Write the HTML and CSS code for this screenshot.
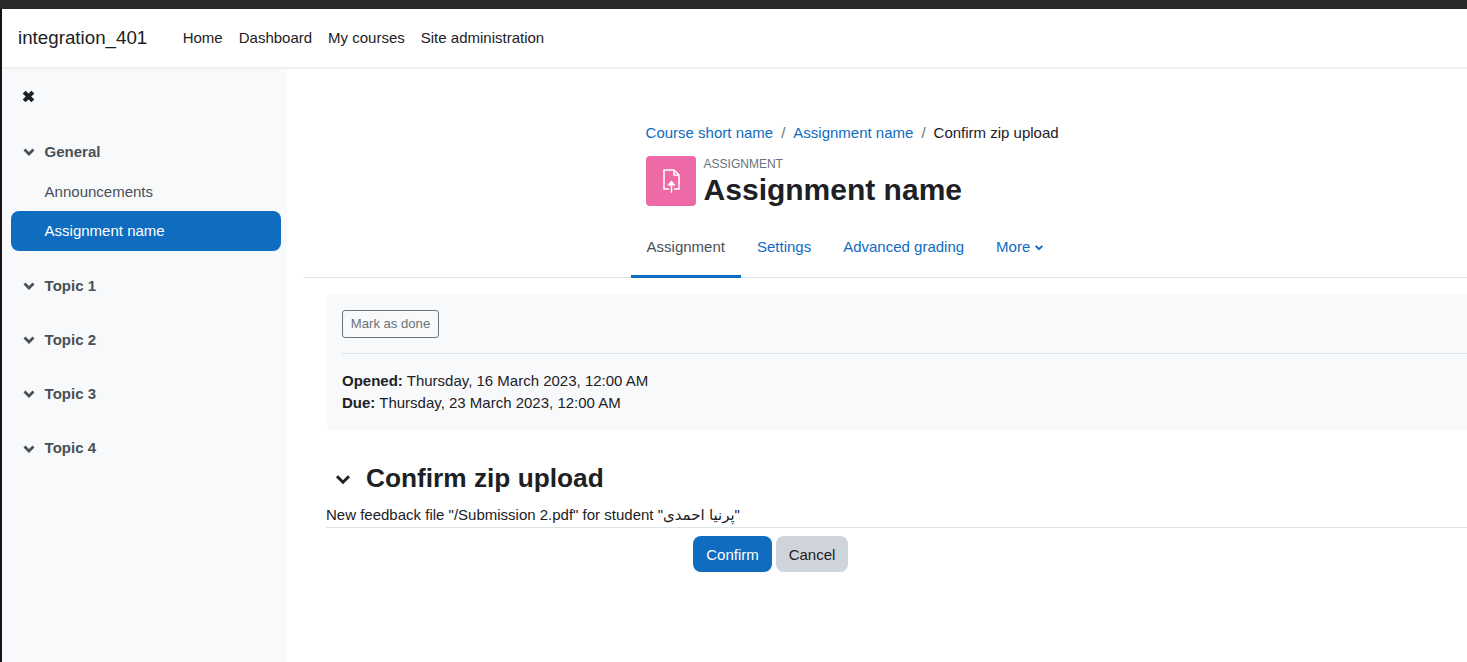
FILE: index.html
```html
<!DOCTYPE html>
<html lang="en">
<head>
<meta charset="utf-8">
<title>Confirm zip upload</title>
<link rel="stylesheet" href="styles.css">
</head>
<body>
<div class="titlebar"></div>
<div class="window">
  <header class="navbar">
    <a class="brand">integration_401</a>
    <nav class="primary">
      <a>Home</a><a>Dashboard</a><a>My courses</a><a>Site administration</a>
    </nav>
  </header>
  <div class="body">
    <aside class="drawer">
      <svg class="close" viewBox="0 0 12 12"><path d="M2 2 L10 10 M10 2 L2 10" /></svg>
      <section class="sec sec-first">
        <div class="sec-title"><svg class="chev" viewBox="0 0 12 8"><path d="M1.5 1.5 L6 6 L10.5 1.5"/></svg>General</div>
        <a class="item">Announcements</a>
        <a class="item active">Assignment name</a>
      </section>
      <section class="sec"><div class="sec-title"><svg class="chev" viewBox="0 0 12 8"><path d="M1.5 1.5 L6 6 L10.5 1.5"/></svg>Topic 1</div></section>
      <section class="sec"><div class="sec-title"><svg class="chev" viewBox="0 0 12 8"><path d="M1.5 1.5 L6 6 L10.5 1.5"/></svg>Topic 2</div></section>
      <section class="sec"><div class="sec-title"><svg class="chev" viewBox="0 0 12 8"><path d="M1.5 1.5 L6 6 L10.5 1.5"/></svg>Topic 3</div></section>
      <section class="sec"><div class="sec-title"><svg class="chev" viewBox="0 0 12 8"><path d="M1.5 1.5 L6 6 L10.5 1.5"/></svg>Topic 4</div></section>
    </aside>
    <main class="main">
      <div class="head">
        <ol class="crumbs">
          <li><a>Course short name</a></li><li class="sep">/</li>
          <li><a>Assignment name</a></li><li class="sep">/</li>
          <li>Confirm zip upload</li>
        </ol>
        <div class="title-row">
          <div class="modicon">
            <svg class="modsvg" viewBox="0 0 24 24" width="24" height="24"><path class="ic" d="M10 20H5V1H15L20 6V20H15"/><path class="ic" d="M15 1V6H20"/><path class="ic" d="M12.5 15V23.7"/><path class="icf" d="M8.2 16.6 12.5 11.6 16.8 16.6z"/></svg>
          </div>
          <div class="titles">
            <div class="modtype">ASSIGNMENT</div>
            <h1>Assignment name</h1>
          </div>
        </div>
      </div>
      <nav class="tabs">
        <a class="tab current">Assignment</a>
        <a class="tab">Settings</a>
        <a class="tab">Advanced grading</a>
        <a class="tab">More <svg class="more" viewBox="0 0 12 8"><path d="M2 2 L6 6 L10 2"/></svg></a>
      </nav>
      <div class="content">
        <div class="activity">
          <button class="done">Mark as done</button>
          <hr class="rule">
          <div class="dates"><strong>Opened:</strong> Thursday, 16 March 2023, 12:00 AM</div>
          <div class="dates"><strong>Due:</strong> Thursday, 23 March 2023, 12:00 AM</div>
        </div>
        <h2 class="confirm"><svg class="chev2" viewBox="0 0 12 8"><path d="M1.5 1.5 L6 6 L10.5 1.5"/></svg>Confirm zip upload</h2>
        <p class="msg">New feedback file "/Submission 2.pdf" for student "پرنیا احمدی"</p>
        <div class="actions">
          <button class="btn primary-btn">Confirm</button>
          <button class="btn secondary-btn">Cancel</button>
        </div>
      </div>
    </main>
  </div>
</div>
</body>
</html>
```
FILE: styles.css
```css
* { box-sizing: border-box; }
html, body { margin: 0; padding: 0; height: 100%; overflow: hidden; }
body {
  background: #fff;
  color: #1d2125;
  font-family: "Liberation Sans", "Noto Sans", "DejaVu Sans", sans-serif;
  font-size: 15px;
  line-height: 22.5px;
  display: flex;
  flex-direction: column;
}
a { color: inherit; text-decoration: none; }
.titlebar { height: 9px; background: #2a2a2a; flex: none; }
.window { flex: 1; display: flex; flex-direction: column; border-left: 2px solid #1a1118; min-height: 0; }
.navbar {
  height: 60px; flex: none; display: flex; align-items: center;
  border-bottom: 2px solid #eeeff1; padding-left: 16px;
}
.brand { font-size: 18.75px; width: 164.7px; flex: none; }
.primary { display: flex; gap: 16px; }
.body { flex: 1; display: flex; min-height: 0; }
.drawer { width: 285px; flex: none; background: #f8f9fa; padding: 17px 6px 0 9px; }
.close { display: block; width: 13px; height: 13px; margin: 4px 0 0 10.5px; fill: none; stroke: #1d2125; stroke-width: 3.8; }
.sec { margin-bottom: 32.2px; color: #495057; }
.sec-first { margin-top: 38px; margin-bottom: 24px; }
.sec-title { display: flex; align-items: center; font-weight: 700; height: 22px; padding-left: 12px; }
.chev { width: 12px; height: 8px; margin-right: 9.6px; fill: none; stroke: #495057; stroke-width: 2.8; }
.item { display: flex; align-items: center; height: 40px; padding-left: 33.6px; border-radius: 8px; }
.sec-first .item:first-of-type { margin-top: 9px; height: 39px; padding-top: 2px; }
.item.active { background: #0f6cbf; color: #fff; }
.main { flex: 1; min-width: 0; padding-left: 16px; }
.head { padding: 52px 0 0 342.6px; }
.crumbs { list-style: none; margin: 0; padding: 0; display: flex; height: 24px; align-items: center; white-space: nowrap; }
.crumbs a { color: #0f6cbf; }
.sep { padding: 0 8px; color: #6a737b; }
.title-row { display: flex; margin-top: 11px; }
.modicon { width: 50px; height: 50px; background: #ee6aa6; border-radius: 4px; display: flex; align-items: center; justify-content: center; margin-right: 8px; flex: none; }
.modsvg { overflow: visible; }
.ic { fill: none; stroke: #fff; stroke-width: 1.5; }
.icf { fill: #fff; }
.titles { min-width: 0; padding-top: 1px; }
.modtype { font-size: 12px; line-height: 14px; color: #6a737b; }
h1 { margin: 1px 0 0; font-size: 30px; line-height: 36px; font-weight: 700; white-space: nowrap; }
.tabs { display: flex; margin-top: 18px; height: 52px; border-bottom: 1px solid #dee2e6; padding-left: 327.6px; }
.tab { padding: 0 16px 7px; height: 52px; display: flex; align-items: center; color: #0f6cbf; white-space: nowrap; border-bottom: 3px solid transparent; }
.tab.current { color: #495057; border-bottom-color: #0f6cbf; }
.more { width: 10px; height: 7px; margin-left: 4px; fill: none; stroke: #0f6cbf; stroke-width: 2.4; }
.content { padding: 16px 0 0 23px; }
.activity { background: #f8f9fa; border-radius: 8px 0 0 8px; height: 136px; padding: 16px 0 0 16px; }
.done { display: block; height: 28px; width: 97px; padding: 0; background: transparent; border: 1px solid #6a737b; border-radius: 3px; color: #6a737b; font: 13.1px/1 "Liberation Sans", sans-serif; }
.rule { border: 0; border-top: 1px solid #dee2e6; margin: 15px 0 16px; }
.dates { height: 22px; }
.confirm { display: flex; align-items: center; margin: 32px 0 0; font-size: 26.25px; line-height: 32px; font-weight: 700; height: 32px; padding-left: 9px; }
.chev2 { width: 16px; height: 11px; margin-right: 15px; margin-top: 3px; fill: none; stroke: #1d2125; stroke-width: 2.2; }
.msg { margin: 10px 0 0; height: 24px; border-bottom: 1px solid #dee2e6; white-space: nowrap; }
.actions { display: flex; gap: 4px; margin-top: 8px; padding-left: 367px; }
.btn { height: 36px; border: 0; border-radius: 8px; font: 15px/1 "Liberation Sans", sans-serif; padding: 0; }
.primary-btn { width: 79px; background: #0f6cbf; color: #fff; }
.secondary-btn { width: 72px; background: #ced4da; color: #1d2125; }
```
